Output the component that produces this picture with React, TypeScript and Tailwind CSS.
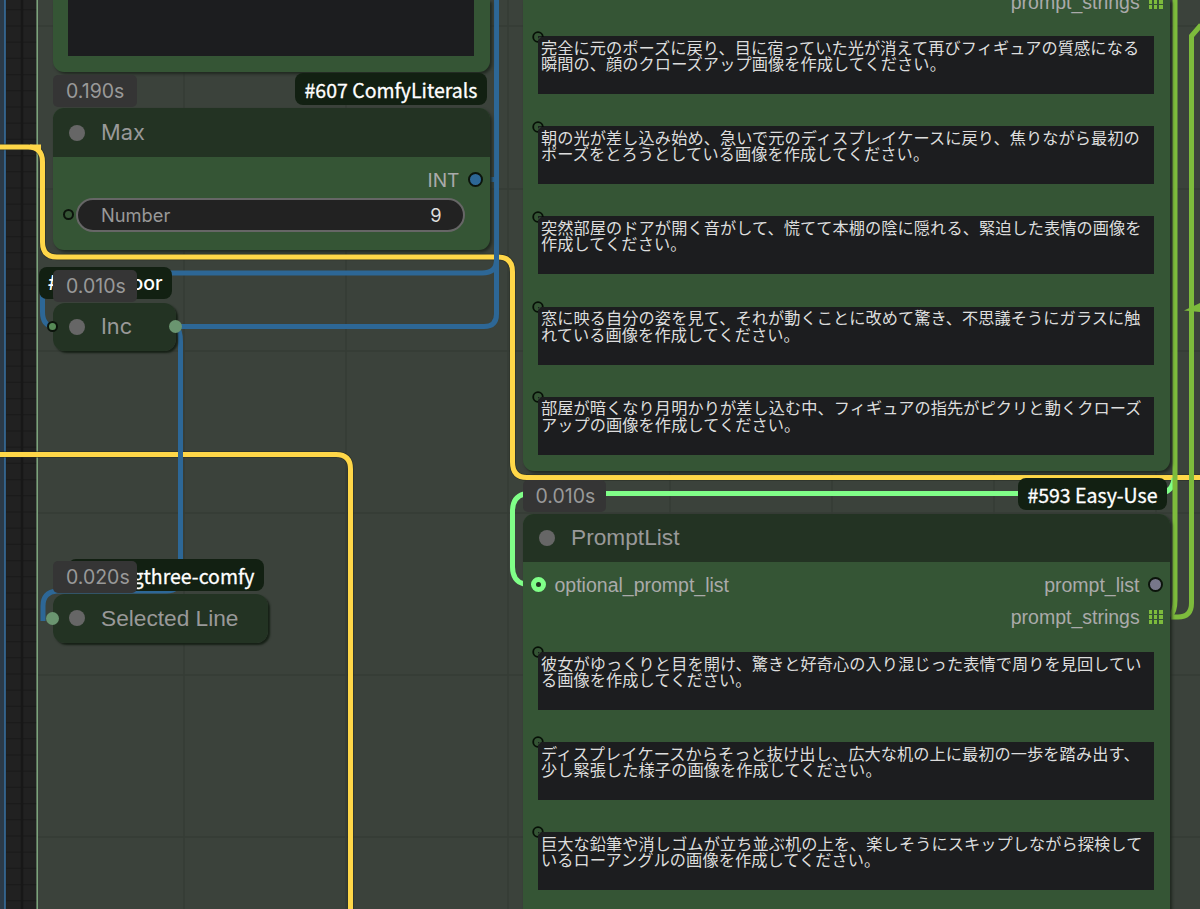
import type { ReactNode } from "react"
import clsx from "clsx"

const upperPrompts = [
  ["完全に元のポーズに戻り、目に宿っていた光が消えて再びフィギュアの質感になる", "瞬間の、顔のクローズアップ画像を作成してください。"],
  ["朝の光が差し込み始め、急いで元のディスプレイケースに戻り、焦りながら最初の", "ポーズをとろうとしている画像を作成してください。"],
  ["突然部屋のドアが開く音がして、慌てて本棚の陰に隠れる、緊迫した表情の画像を", "作成してください。"],
  ["窓に映る自分の姿を見て、それが動くことに改めて驚き、不思議そうにガラスに触", "れている画像を作成してください。"],
  ["部屋が暗くなり月明かりが差し込む中、フィギュアの指先がピクリと動くクローズ", "アップの画像を作成してください。"],
]

const lowerPrompts = [
  ["彼女がゆっくりと目を開け、驚きと好奇心の入り混じった表情で周りを見回してい", "る画像を作成してください。"],
  ["ディスプレイケースからそっと抜け出し、広大な机の上に最初の一歩を踏み出す、", "少し緊張した様子の画像を作成してください。"],
  ["巨大な鉛筆や消しゴムが立ち並ぶ机の上を、楽しそうにスキップしながら探検して", "いるローアングルの画像を作成してください。"],
]

const minorX = Array.from({ length: 75 }, (_, i) => 5.8 + i * 16.2)
const minorY = Array.from({ length: 57 }, (_, i) => -6.4 + i * 16.2)
const majorX = [22, 184, 346, 508, 670, 832, 994, 1156]
const majorY = [26, 189, 351, 513, 675, 837]

function Grid() {
  return (
    <svg className="absolute inset-0" width="1200" height="909">
      <rect width="1200" height="909" fill="#212121" />
      <g stroke="#1b1b1b" strokeWidth="1">
        {minorX.map((x) => (
          <path key={x} d={`M${x} 0V909`} />
        ))}
        {minorY.map((y) => (
          <path key={y} d={`M0 ${y}H1200`} />
        ))}
      </g>
      <rect width="5" height="909" fill="#2b3a48" />
      <path d="M5 0V909" stroke="#386f9e" strokeWidth="1.6" />
      <rect x="37" width="1163" height="909" fill="#3b423b" />
      <path d="M37.2 0V909" stroke="#7ca27c" strokeWidth="1.6" />
      <g stroke="#363c36" strokeWidth="1.5">
        {majorX.slice(1).map((x) => (
          <path key={x} d={`M${x} 0V909`} />
        ))}
        {majorY.map((y) => (
          <path key={y} d={`M38 ${y}H1200`} />
        ))}
      </g>
      <path d="M22 0V909" stroke="#171717" strokeWidth="2.4" />
    </svg>
  )
}

function Links() {
  return (
    <svg className="absolute inset-0" width="1200" height="909" fill="none" strokeWidth="5">
      <g stroke="#2d6796">
        <path d="M496.5 0V314Q496.5 326.5 484 326.5H176" />
        <path d="M490 179.5H496.5V260Q496.5 273 482 273H56Q42.5 273 42.5 288V312Q42.5 326 54 326.5" />
        <path d="M176 326.5Q180.5 330 180.5 342V576Q180.5 591 166 591H57Q43 592 43 606V621" />
      </g>
      <g stroke="#242a20" strokeWidth="6.5" opacity=".6">
        <path d="M0 147H28Q42.5 147 42.5 162V242Q42.5 257 57 257H498Q512.5 257 512.5 272V462Q512.5 477.5 527 477.5H1200" />
        <path d="M0 454.5H336Q350.5 454.5 350.5 469V909" />
      </g>
      <g stroke="#ffd748">
        <path d="M0 147H28Q42.5 147 42.5 162V242Q42.5 257 57 257H498Q512.5 257 512.5 272V462Q512.5 477.5 527 477.5H1200" />
        <path d="M0 454.5H336Q350.5 454.5 350.5 469V909" />
      </g>
      <path d="M30 144.5H41V152Q38 147 30 147Z" fill="#ffd748" />
      <path d="M496.5 245V314" stroke="#2d6796" />
      <path d="M180.5 445V465" stroke="#2d6796" />
      <path d="M524 494Q512.5 497 512.5 511V567Q512.5 581 524 584" stroke="#80ff88" />
      <path d="M600 493.5H1158Q1173 493 1174 478" stroke="#80ff88" />
      <g stroke="#7dbb3c">
        <path d="M1175 0V600Q1175 612 1170 616" />
        <path d="M1201 25L1191.5 36V603Q1191.5 617 1178 617H1171" />
      </g>
      <path d="M1184 310.5L1200 303V312Z" fill="#7dbb3c" />
    </svg>
  )
}

function TimeBadge({ className, children }: { className: string; children: ReactNode }) {
  return (
    <div className={clsx("absolute flex h-[32px] w-[83.5px] items-center rounded-[5px] bg-[#353535] pt-[2px] pl-[13px] font-['Inter'] text-[19.5px] leading-none text-[#999]", className)}>
      {children}
    </div>
  )
}

function SourceBadge({ className, children }: { className: string; children: ReactNode }) {
  return (
    <div className={clsx("absolute flex h-[32px] items-center justify-end overflow-hidden rounded-[8px] bg-[#122012] pt-[2px] pr-[9.5px] text-[19.5px] leading-none whitespace-nowrap text-white", className)}>
      {children}
    </div>
  )
}

function TitleBar({ title, className }: { title: string; className?: string }) {
  return (
    <div className={clsx("flex h-[48.5px] items-center gap-4 bg-[#233323] pl-4 leading-none text-[#999]", className)}>
      <span className="h-4 w-4 rounded-full bg-[#666]" />
      <span className="pl-[0.5px]">{title}</span>
    </div>
  )
}

function PromptBox({ lines }: { lines: string[] }) {
  return (
    <div className="relative h-[58px] bg-[#1c1d1f] pt-[2.8px] pl-[3px] font-['Noto_Sans_CJK_JP',sans-serif] text-[16.21px] leading-[16.2px] tracking-[0.08px] whitespace-nowrap text-[#ddd]">
      <svg className="absolute -top-[5.5px] -left-[6px]" width="12" height="12">
        <path d="M6 10.8A4.8 4.8 0 1 1 10.8 6" fill="none" stroke="#071007" strokeWidth="1.8" />
        <path d="M6.5 8.5Q6.5 6.5 8.5 6.5" fill="none" stroke="#335533" strokeWidth="1" />
      </svg>
      {lines.map((line) => (
        <div key={line}>{line}</div>
      ))}
    </div>
  )
}

function ListDots() {
  return (
    <span className="grid grid-cols-3 gap-[1.5px]">
      {Array.from({ length: 9 }, (_, i) => (
        <span key={i} className="h-[3.6px] w-[3.6px] bg-[#7dbb3c]" />
      ))}
    </span>
  )
}

function StringsOutput() {
  return (
    <div className="flex h-[32.4px] items-center justify-end gap-[9px] pr-[7px]">
      <span className="pt-px">prompt_strings</span>
      <ListDots />
    </div>
  )
}

export default function App() {
  return (
    <div className="relative h-[909px] w-[1200px] overflow-hidden bg-[#212121] font-['Liberation_Sans',sans-serif]">
      <Grid />
      <Links />

      <section className="absolute top-0 left-[52.5px] h-[72px] w-[437px] rounded-b-[11px] bg-[#355535] px-[15.5px] shadow-[2px_2px_3px_#202820]">
        <div className="h-[56px] bg-[#1c1d1f]" />
      </section>

      <section className="absolute top-[108px] left-[52.5px] h-[142px] w-[437px] overflow-hidden rounded-[11px] bg-[#355535] font-['Inter'] shadow-[2px_2px_3px_#202820]">
        <TitleBar title="Max" className="pt-px text-[21.8px]" />
        <div className="flex h-[46px] items-center justify-end gap-[8.5px] pr-[6.5px] text-[19.2px] text-[#aaa]">
          <span className="pt-[2px]">INT</span>
          <span className="h-[15px] w-[15px] rounded-full border-2 border-[#0c140c] bg-[#2d6796]" />
        </div>
        <div className="-mt-[5px] flex items-center gap-[2px] pl-[10.5px]">
          <span className="h-[11px] w-[11px] rounded-full border-2 border-[#0c140c]" />
          <div className="flex h-[34px] w-[389px] items-center justify-between rounded-full border-2 border-[#666] bg-[#222] pt-[2px] pr-[21.5px] pl-[23px] text-[18.3px] text-[#999]">
            <span>Number</span>
            <span className="text-[#ddd]">9</span>
          </div>
        </div>
      </section>
      <SourceBadge className="top-[73px] left-[295px] w-[192px] font-['Noto_Sans_CJK_JP',sans-serif] [-webkit-text-stroke:0.3px_white]">#607 ComfyLiterals</SourceBadge>
      <TimeBadge className="top-[75px] left-[53px]">0.190s</TimeBadge>

      <section className="absolute top-[302.5px] left-[52.5px] w-[123.5px] rounded-[12px] font-['Inter'] shadow-[2px_2px_2px_#162016]">
        <TitleBar title="Inc" className="rounded-[12px] pt-px text-[21.8px]" />
      </section>
      <SourceBadge className="top-[267px] left-[39px] w-[133px] font-['Inter'] font-medium">
        <span className="flex-1 pl-[9px]">#</span>
        <span>oor</span>
      </SourceBadge>
      <TimeBadge className="top-[269.5px] left-[53px]">0.010s</TimeBadge>
      <span className="absolute top-[321px] left-[47px] h-[11px] w-[11px] rounded-full border-2 border-[#0c140c] bg-[#578a57]" />
      <span className="absolute top-[320px] left-[169px] h-[13px] w-[13px] rounded-full bg-[#6a9570]" />

      <section className="absolute top-[594px] left-[52.5px] w-[215px] rounded-[12px] shadow-[2px_2px_2px_#162016]">
        <TitleBar title="Selected Line" className="rounded-[12px] text-[22.7px]" />
      </section>
      <SourceBadge className="top-[559px] left-[68px] w-[196px] font-['Noto_Sans_CJK_JP',sans-serif] [-webkit-text-stroke:0.3px_white]">gthree-comfy</SourceBadge>
      <TimeBadge className="top-[561px] left-[53px]">0.020s</TimeBadge>
      <span className="absolute top-[612px] left-[46px] h-[13px] w-[13px] rounded-full bg-[#6a9570]" />

      <section className="absolute top-0 left-[522.5px] h-[470.5px] w-[647px] overflow-hidden rounded-b-[11px] bg-[#355535] text-[19.5px] text-[#aaa] shadow-[2px_2px_3px_#202820]">
        <div className="-mt-[14px]">
          <StringsOutput />
        </div>
        <div className="mt-[17.9px] flex flex-col gap-[32.1px] px-[15.5px]">
          {upperPrompts.map((lines) => (
            <PromptBox key={lines[0]} lines={lines} />
          ))}
        </div>
      </section>

      <section className="absolute top-[513.5px] left-[522.5px] h-[420px] w-[647px] overflow-hidden rounded-[11px] bg-[#355535] text-[19.5px] text-[#aaa] shadow-[2px_2px_3px_#202820]">
        <TitleBar title="PromptList" className="text-[22.7px]" />
        <div className="mt-[6px] flex h-[32.4px] items-center pr-[6.5px] pl-[8.5px]">
          <span className="h-[15px] w-[15px] rounded-full border-[5px] border-[#80ff88] bg-[#223322]" />
          <span className="ml-[8.5px] flex-1 pt-[3px]">optional_prompt_list</span>
          <span className="pt-[3px]">prompt_list</span>
          <span className="ml-[8.5px] h-[15px] w-[15px] rounded-full border-2 border-[#0c140c] bg-[#77778a]" />
        </div>
        <div className="pt-[0.6px]">
          <StringsOutput />
        </div>
        <div className="mt-[18.4px] flex flex-col gap-[32.1px] px-[15.5px]">
          {lowerPrompts.map((lines) => (
            <PromptBox key={lines[0]} lines={lines} />
          ))}
        </div>
      </section>
      <SourceBadge className="top-[478px] left-[1018px] w-[149px] font-['Noto_Sans_CJK_JP',sans-serif] [-webkit-text-stroke:0.3px_white]">#593 Easy-Use</SourceBadge>
      <TimeBadge className="top-[480px] left-[522.5px]">0.010s</TimeBadge>
    </div>
  )
}
